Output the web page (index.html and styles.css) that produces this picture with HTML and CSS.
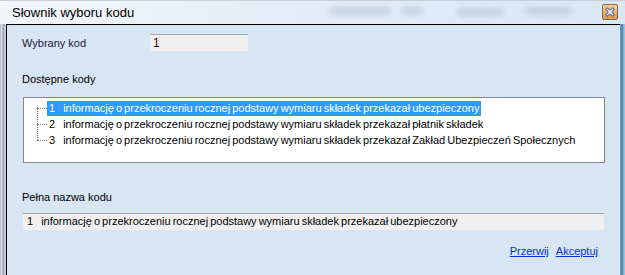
FILE: index.html
```html
<!DOCTYPE html>
<html>

<head lang="pl">
  <meta charset="UTF-8">
  <title>Słownik wyboru kodu</title>
  <link rel="stylesheet" href="styles.css">
</head>

<body>
  <div class="window">
    <div class="title-bar">
      <span class="title-text">Słownik wyboru kodu</span>
      <span class="blur b1"></span>
      <span class="blur b2"></span>
      <span class="blur b3"></span>
      <span class="blur b4"></span>
      <a class="close-btn" href="javascript:void(0);">
        <svg width="16" height="16" viewBox="0 0 16 16">
          <path d="M4.5 4.5 L11.5 11.5 M11.5 4.5 L4.5 11.5" stroke="#3a3f9a" stroke-width="4" stroke-linecap="square"/>
          <path d="M4.5 4.5 L11.5 11.5 M11.5 4.5 L4.5 11.5" stroke="#ffffff" stroke-width="2" stroke-linecap="square"/>
        </svg>
      </a>
    </div>
    <div class="window-main">
      <div class="edge-left"></div>
      <div class="panel">
        <div class="row-kod">
          <label>Wybrany kod</label>
          <div class="kod-input">1</div>
        </div>

        <div class="section-label">Dostępne kody</div>
        <div class="tree">
          <div class="tree-lines"></div>
          <div class="tree-item"><span class="branch"></span><span class="item-text selected"><span class="num">1</span>informację o przekroczeniu rocznej podstawy wymiaru składek przekazał ubezpieczony</span></div>
          <div class="tree-item"><span class="branch"></span><span class="item-text"><span class="num">2</span>informację o przekroczeniu rocznej podstawy wymiaru składek przekazał płatnik składek</span></div>
          <div class="tree-item"><span class="branch"></span><span class="item-text"><span class="num">3</span>informację o przekroczeniu rocznej podstawy wymiaru składek przekazał Zakład Ubezpieczeń Społecznych</span></div>
        </div>

        <div class="section-label full-label">Pełna nazwa kodu</div>
        <div class="full-name"><span class="num">1</span>informację o przekroczeniu rocznej podstawy wymiaru składek przekazał ubezpieczony</div>

        <div class="buttons">
          <a href="javascript:void(0);">Przerwij</a>
          <a href="javascript:void(0);">Akceptuj</a>
        </div>
      </div>
      <div class="edge-right"></div>
    </div>
  </div>
</body>

</html>
```

FILE: styles.css
```css
html,
body {
  margin: 0px;
  padding: 0px;
}

body {
  width: 625px;
  height: 275px;
  overflow: hidden;
  font-family: "Liberation Sans", Arial, sans-serif;
  font-size: 11px;
  color: #000000;
}

.window {
  width: 625px;
  height: 275px;
  display: flex;
  flex-direction: column;
  background: #d8e5f3;
}

.title-bar {
  height: 24px;
  position: relative;
  background: linear-gradient(to right, #f3f6fa 0px, #eef3f9 110px, #e3edf8 300px, #d9e7f7 625px);
  border-top: 1px solid #c6cfda;
  box-sizing: border-box;
}

.title-text {
  position: absolute;
  left: 12px;
  top: 4px;
  font-size: 13px;
  color: #000000;
}

.blur {
  position: absolute;
  height: 6px;
  background: #9aa7b8;
  filter: blur(3px);
  opacity: 0.5;
}

.b1 { left: 330px; top: 7px; width: 60px; }
.b2 { left: 402px; top: 7px; width: 20px; }
.b3 { left: 458px; top: 8px; width: 45px; }
.b4 { left: 526px; top: 7px; width: 45px; }

.close-btn {
  position: absolute;
  left: 602px;
  top: 3px;
  width: 16px;
  height: 16px;
  box-sizing: border-box;
  border: 1px solid #8c6a3c;
  border-radius: 2px;
  background: linear-gradient(to bottom, #f2cf98, #d99a4e);
  display: flex;
  align-items: center;
  justify-content: center;
}

.close-btn svg {
  width: 12px;
  height: 12px;
}

.window-main {
  flex: 1;
  display: flex;
}

.edge-left {
  width: 6px;
  background: linear-gradient(to right, #aeb6c4, #e4e9f0 2px, #8d99ab 3px, #c9d1dc 5px);
}

.edge-right {
  width: 5px;
  background: linear-gradient(to right, #7fa6c8, #3c7ea8 2px, #9cc0d8 4px);
}

.panel {
  flex: 1;
  border-top: 1px solid #000000;
  border-left: 1px solid #000000;
  padding: 9px 15px 0px 15px;
  background: #d8e5f3;
}

.row-kod {
  display: flex;
  align-items: center;
  height: 17px;
}

.row-kod label {
  width: 128px;
  color: #202040;
}

.kod-input {
  width: 98px;
  height: 17px;
  box-sizing: border-box;
  background: #f0f0f0;
  border-top: 1px solid #a8a8a8;
  padding: 1px 0px 0px 3px;
  color: #400000;
  font-size: 12px;
}

.section-label {
  margin-top: 22px;
  height: 13px;
  line-height: 13px;
}

.tree {
  position: relative;
  margin-top: 11px;
  margin-left: 1px;
  width: 582px;
  height: 66px;
  box-sizing: border-box;
  border: 1px solid #828790;
  background: #ffffff;
  padding-top: 2px;
  word-spacing: -1px;
}

.tree-lines {
  position: absolute;
  left: 13px;
  top: 9px;
  height: 33px;
  border-left: 1px dotted #808080;
}

.tree-item {
  height: 16px;
  display: flex;
  align-items: center;
  padding-left: 13px;
}

.branch {
  width: 10px;
  border-top: 1px dotted #808080;
}

.item-text {
  padding: 1px 2px 2px 2px;
  white-space: nowrap;
}

.item-text.selected {
  background: #3399ff;
  color: #ffffff;
}

.num {
  display: inline-block;
  margin-right: 8px;
}

.full-label {
  margin-top: 28px;
}

.full-name {
  margin-top: 9px;
  margin-left: 1px;
  width: 581px;
  height: 17px;
  box-sizing: border-box;
  background: #f0f0f0;
  border-top: 1px solid #a8a8a8;
  padding: 1px 0px 0px 4px;
  white-space: nowrap;
  word-spacing: -1px;
}

.buttons {
  margin-top: 15px;
  display: flex;
  justify-content: flex-end;
  gap: 7px;
  padding-right: 7px;
}

.buttons a {
  color: #0033cc;
  text-decoration: underline;
}
```
